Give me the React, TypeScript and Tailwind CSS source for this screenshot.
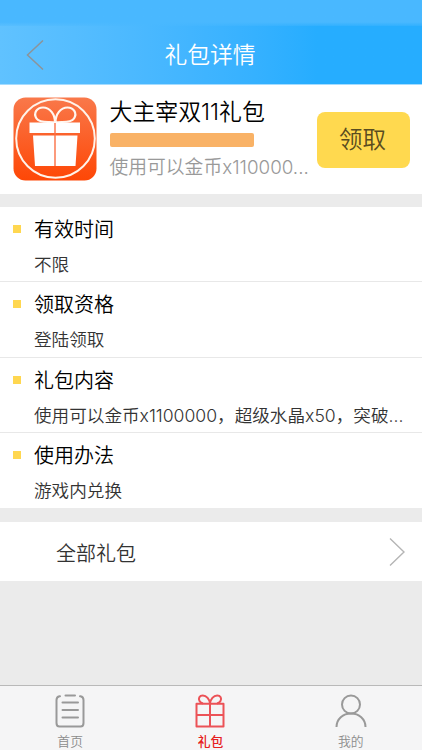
import React from 'react'

const details = [
    { title: '有效时间', text: '不限' },
    { title: '领取资格', text: '登陆领取' },
    { title: '礼包内容', text: '使用可以金币x1100000，超级水晶x50，突破...' },
    { title: '使用办法', text: '游戏内兑换' },
]

const GiftLogo = () => (
    <svg className="h-[84px] w-[84px] shrink-0" viewBox="0 0 84 84" fill="none">
        <defs>
            <linearGradient id="logo" x1="0" y1="0" x2="0" y2="1">
                <stop offset="0" stopColor="#f9784a" />
                <stop offset="1" stopColor="#fe4706" />
            </linearGradient>
        </defs>
        <rect x="0.5" y="0.5" width="83" height="83" rx="12" fill="url(#logo)" />
        <circle cx="42.5" cy="41.5" r="39.300" stroke="#fff3ea" strokeWidth="2" />
        <path d="M42 25.500C37 24 27 27 23.500 21.500C20 16 24 10.500 30 10.500C37 10.500 42 17 42 25.500ZM42.500 25.500C47.500 24 57.500 27 61 21.500C64.500 16 60.500 10.500 54.500 10.500C47.500 10.500 42.500 17 42.500 25.500Z" stroke="#fff6ef" strokeWidth="2.200" />
        <path d="M16.500 25.500H67V36H16.500ZM20 38.500H64.500L62.500 69H22Z" fill="#fff" />
        <path d="M42 26V69" stroke="#fb7045" strokeWidth="1.400" />
    </svg>
)

const HomeIcon = () => (
    <svg className="h-9 w-9" viewBox="0 0 36 36" fill="none" stroke="#999" strokeWidth="2" strokeLinecap="round">
        <path d="M8 3.200H7.500Q4.500 3.700 4.500 7V30Q4.500 33.500 7.500 33.500H28.500Q31.500 33.500 31.500 30V7Q31.500 3.700 28.500 3.200H28" />
        <path d="M13.500 2.500H23M10.500 9.500H26M10.500 17H26M10.500 24.500H26" />
    </svg>
)

const GiftIcon = () => (
    <svg className="h-9 w-9" viewBox="0 0 36 36" fill="none" stroke="#ec5257" strokeWidth="2" strokeLinejoin="round">
        <path d="M4.500 10.800H31.500V33.500H4.500ZM18 10.500V33.500M4.500 22H31.500" />
        <path d="M18 10.500C17.500 6 14.500 2.500 10.800 2.500C7.500 2.500 6 5.500 7.500 8C8.300 9.500 9.500 10.200 11 10.500M18 10.500C18.500 6 21.500 2.500 25.200 2.500C28.500 2.500 30 5.500 28.500 8C27.700 9.500 26.500 10.200 25 10.500" />
    </svg>
)

const UserIcon = () => (
    <svg className="h-9 w-9" viewBox="0 0 36 36" fill="none" stroke="#999" strokeWidth="2">
        <circle cx="18" cy="11.500" r="9" />
        <path d="M3.500 34C3.500 26 10 20.500 18 20.500S32.500 26 32.500 34" />
    </svg>
)

const tabs = [
    { label: '首页', icon: <HomeIcon />, style: 'text-[#8c8c8c]' },
    { label: '礼包', icon: <GiftIcon />, style: 'text-[#e62020] font-medium' },
    { label: '我的', icon: <UserIcon />, style: 'text-[#8c8c8c]' },
]

const App = () => {
    return (
        <div className="flex h-[750px] w-[422px] flex-col overflow-hidden bg-[#ebebeb] font-['Inter','Noto_Sans_CJK_SC',sans-serif] font-[350] text-black">
            <header className="flex h-[85px] shrink-0 flex-col border-b border-[#a5dcff] bg-linear-to-r from-[#60c2ff] via-[#42b5ff] via-45% to-[#26adff] to-75%">
                <div className="h-[26px] bg-linear-to-b from-[#49b8ff] from-85% to-[#49b8ff]/30" />
                <div className="grid flex-1 grid-cols-[60px_1fr_62px] items-center">
                    <svg className="ml-[26px] h-[30px] w-[18px]" viewBox="0 0 18 30" fill="none" stroke="#8b949b" strokeWidth="1.500">
                        <path d="M17 0.500L1.500 15L17 29.500" />
                    </svg>
                    <h1 className="text-center text-[22.800px] leading-8 text-white">礼包详情</h1>
                </div>
            </header>

            <section className="flex h-[109px] shrink-0 bg-white pt-3 pl-[12.500px]">
                <GiftLogo />
                <div className="ml-[13px] flex w-[202px] flex-col">
                    <h2 className="text-[22.900px] leading-[30px] whitespace-nowrap">大主宰双11礼包</h2>
                    <div className="mt-[6px] h-[14px] w-[144px] rounded-[2px] bg-[#f9b266]" />
                    <p className="mt-[7px] text-[18.800px] leading-7 whitespace-nowrap text-[#999]">使用可以金币x110000...</p>
                </div>
                <button className="mt-[14.500px] ml-[5px] h-[56px] w-[93px] rounded-lg bg-[#ffd94f] pt-px pr-px text-[23.500px] text-[#594c20]">领取</button>
            </section>

            <section className="mt-[13px] h-[301px] shrink-0 divide-y divide-[#e8e8e8] bg-white">
                {details.map((item) => (
                    <div key={item.title} className="flex h-[75.300px] pt-2 pl-[13px]">
                        <span className="mt-[10px] h-2 w-2 shrink-0 bg-[#ffd750]" />
                        <div className="ml-[13px]">
                            <h3 className="mt-px text-[20px] leading-7">{item.title}</h3>
                            <p className="mt-[9px] text-[17.600px] leading-6 whitespace-nowrap text-[#333]">{item.text}</p>
                        </div>
                    </div>
                ))}
            </section>

            <section className="mt-[14px] flex h-[59px] shrink-0 items-center justify-between bg-white pr-[17px] pl-14">
                <span className="pt-1 text-[20px] text-[#333]">全部礼包</span>
                <svg className="h-7 w-4" viewBox="0 0 16 28" fill="none" stroke="#b5b5b5" strokeWidth="1.400">
                    <path d="M1 0.500L15 14L1 27.500" />
                </svg>
            </section>

            <nav className="mt-auto grid h-[65px] shrink-0 grid-cols-3 border-t border-[#b9b9b9] bg-[#f5f5f6] pr-px">
                {tabs.map((tab) => (
                    <div key={tab.label} className="flex flex-col items-center pt-[7px]">
                        {tab.icon}
                        <span className={`mt-1 text-[12.800px] leading-[18px] ${tab.style}`}>{tab.label}</span>
                    </div>
                ))}
            </nav>
        </div>
    )
}

export default App
